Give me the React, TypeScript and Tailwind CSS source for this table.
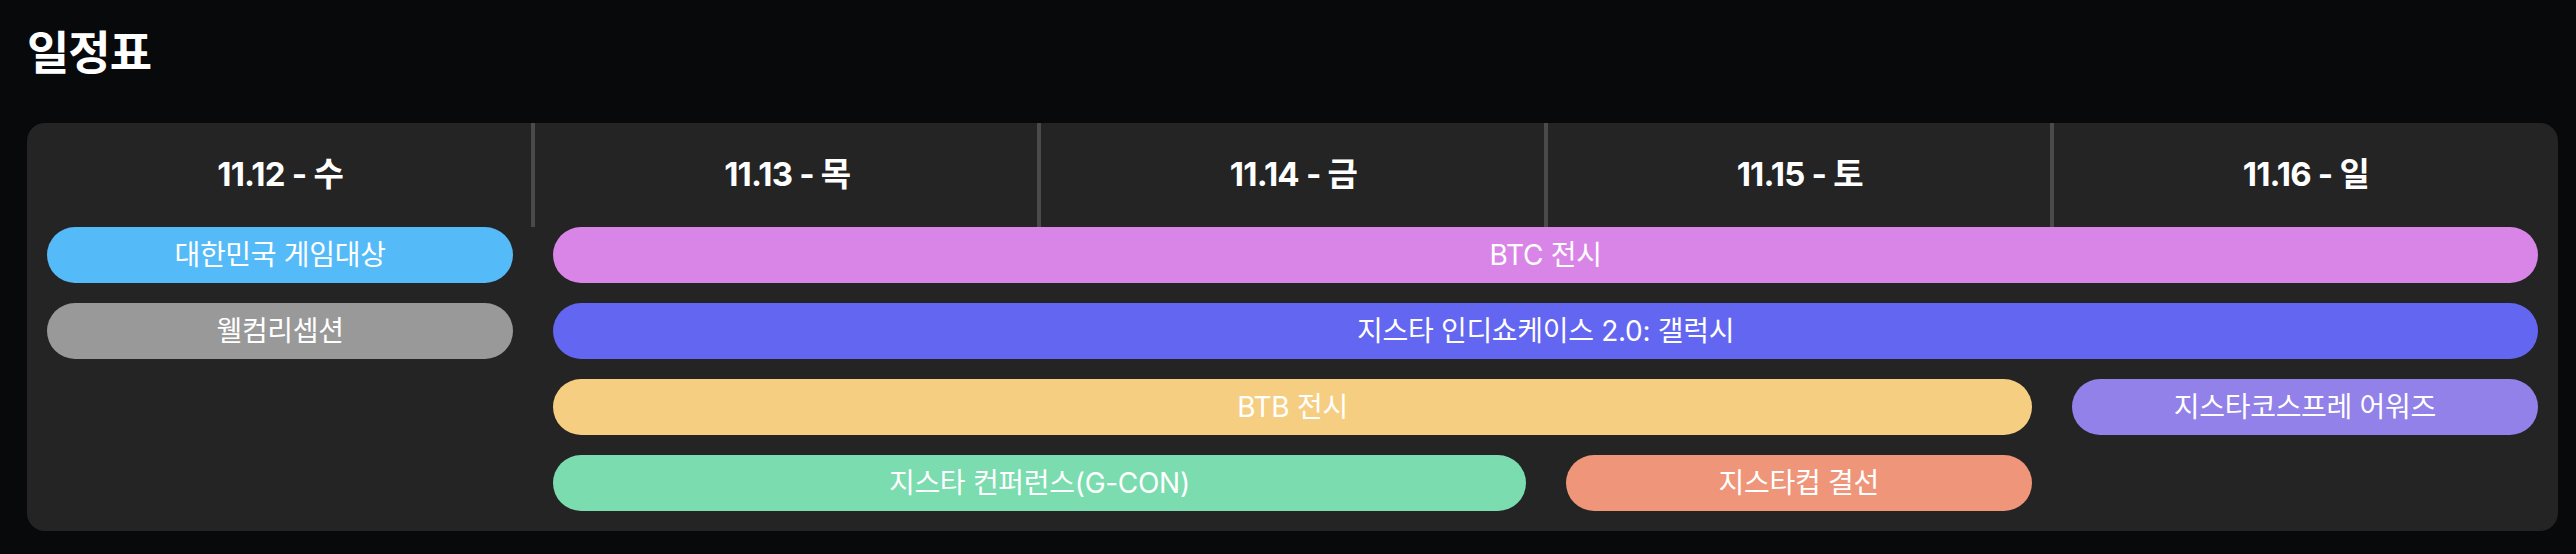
const days = ['11.12 - 수', '11.13 - 목', '11.14 - 금', '11.15 - 토', '11.16 - 일'];

type Event = {
  title: string;
  color: string;
  span: string;
};

// each row is laid out left to right over the 5 day columns
const rows: Event[][] = [
  [
    { title: '대한민국 게임대상', color: 'bg-[#55bbf8]', span: 'col-span-1' },
    { title: 'BTC 전시', color: 'bg-[#d985e8]', span: 'col-span-4' },
  ],
  [
    { title: '웰컴리셉션', color: 'bg-[#999999]', span: 'col-span-1' },
    { title: '지스타 인디쇼케이스 2.0: 갤럭시', color: 'bg-[#6366f1]', span: 'col-span-4' },
  ],
  [
    { title: '', color: '', span: 'col-span-1' },
    { title: 'BTB 전시', color: 'bg-[#f6ce82]', span: 'col-span-3' },
    { title: '지스타코스프레 어워즈', color: 'bg-[#9181e8]', span: 'col-span-1' },
  ],
  [
    { title: '', color: '', span: 'col-span-1' },
    { title: '지스타 컨퍼런스(G-CON)', color: 'bg-[#7bdcaf]', span: 'col-span-2' },
    { title: '지스타컵 결선', color: 'bg-[#ef967a]', span: 'col-span-1' },
  ],
];

export default function App() {
  return (
    <div
      className="min-h-[554px] bg-[#08090b] text-white pl-[27px] pr-[18px] pt-[22px]"
      style={{ fontFamily: "Inter, 'Noto Sans CJK KR', sans-serif" }}
    >
      <h1 className="text-[46px] font-bold leading-[60px] tracking-[-1px]">일정표</h1>

      <div className="mt-[41px] rounded-[18px] bg-[#242424] pb-5">
        <div className="grid grid-cols-5 h-[104px]">
          {days.map((d, i) => (
            <div
              key={d}
              className={`flex items-center justify-center text-[33px] font-bold tracking-[-0.8px] ${
                i > 0 ? 'border-l-4 border-[#4a4a4a] -ml-[2px]' : ''
              }`}
            >
              {d}
            </div>
          ))}
        </div>

        <div className="grid grid-cols-5 gap-y-5">
          {rows.map((row, r) =>
            row.map((ev, i) =>
              ev.title ? (
                <div
                  key={`${r}-${i}`}
                  className={`${ev.span} ${ev.color} mx-5 h-14 rounded-full flex items-center justify-center text-[28px] leading-none tracking-[-0.3px]`}
                >
                  {ev.title}
                </div>
              ) : (
                <div key={`${r}-${i}`} className={ev.span} />
              )
            )
          )}
        </div>
      </div>
    </div>
  );
}
